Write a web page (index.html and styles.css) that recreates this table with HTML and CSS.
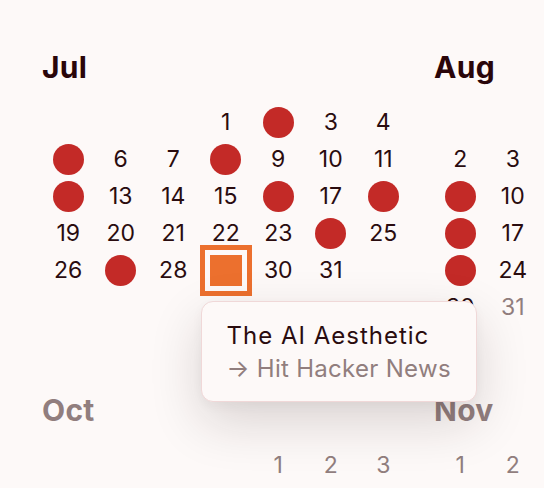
FILE: index.html
```html
<!DOCTYPE html>
<html lang="en">
<head>
<meta charset="utf-8">
<title>Calendar</title>
<link rel="stylesheet" href="styles.css">
</head>
<body>
<main class="year">
  <section class="month">
    <h2 class="month-name">Jul</h2>
    <div class="days">
      <span class="day s3">1</span><span class="day hit" title="Jul 2"><i class="dot"></i></span><span class="day">3</span><span class="day">4</span>
      <span class="day hit" title="Jul 5"><i class="dot"></i></span><span class="day">6</span><span class="day">7</span><span class="day hit" title="Jul 8"><i class="dot"></i></span><span class="day">9</span><span class="day">10</span><span class="day">11</span>
      <span class="day hit" title="Jul 12"><i class="dot"></i></span><span class="day">13</span><span class="day">14</span><span class="day">15</span><span class="day hit" title="Jul 16"><i class="dot"></i></span><span class="day">17</span><span class="day hit" title="Jul 18"><i class="dot"></i></span>
      <span class="day">19</span><span class="day">20</span><span class="day">21</span><span class="day">22</span><span class="day">23</span><span class="day hit" title="Jul 24"><i class="dot"></i></span><span class="day">25</span>
      <span class="day">26</span><span class="day hit" title="Jul 27"><i class="dot"></i></span><span class="day">28</span>
      <span class="day selected"><i class="mark"></i>
        <span class="tooltip">
          <span class="tip-title">The AI Aesthetic</span>
          <span class="tip-sub">→ Hit Hacker News</span>
        </span>
      </span><span class="day">30</span><span class="day">31</span>
    </div>
  </section>

  <section class="month">
    <h2 class="month-name">Aug</h2>
    <div class="days">
      <span class="day s6">1</span>
      <span class="day">2</span><span class="day">3</span><span class="day">4</span><span class="day">5</span><span class="day">6</span><span class="day">7</span><span class="day">8</span>
      <span class="day hit" title="Aug 9"><i class="dot"></i></span><span class="day">10</span><span class="day">11</span><span class="day">12</span><span class="day">13</span><span class="day">14</span><span class="day">15</span>
      <span class="day hit" title="Aug 16"><i class="dot"></i></span><span class="day">17</span><span class="day">18</span><span class="day">19</span><span class="day">20</span><span class="day">21</span><span class="day">22</span>
      <span class="day hit" title="Aug 23"><i class="dot"></i></span><span class="day">24</span><span class="day">25</span><span class="day">26</span><span class="day">27</span><span class="day">28</span><span class="day">29</span>
      <span class="day">30</span><span class="day future">31</span>
    </div>
  </section>

  <section class="month future">
    <h2 class="month-name">Sep</h2>
    <div class="days">
      <span class="day s2">1</span><span class="day">2</span><span class="day">3</span><span class="day">4</span><span class="day">5</span>
      <span class="day">6</span><span class="day">7</span><span class="day">8</span><span class="day">9</span><span class="day">10</span><span class="day">11</span><span class="day">12</span>
      <span class="day">13</span><span class="day">14</span><span class="day">15</span><span class="day">16</span><span class="day">17</span><span class="day">18</span><span class="day">19</span>
      <span class="day">20</span><span class="day">21</span><span class="day">22</span><span class="day">23</span><span class="day">24</span><span class="day">25</span><span class="day">26</span>
      <span class="day">27</span><span class="day">28</span><span class="day">29</span><span class="day">30</span>
    </div>
  </section>

  <section class="month future">
    <h2 class="month-name">Oct</h2>
    <div class="days">
      <span class="day s4">1</span><span class="day">2</span><span class="day">3</span>
      <span class="day">4</span><span class="day">5</span><span class="day">6</span><span class="day">7</span><span class="day">8</span><span class="day">9</span><span class="day">10</span>
      <span class="day">11</span><span class="day">12</span><span class="day">13</span><span class="day">14</span><span class="day">15</span><span class="day">16</span><span class="day">17</span>
      <span class="day">18</span><span class="day">19</span><span class="day">20</span><span class="day">21</span><span class="day">22</span><span class="day">23</span><span class="day">24</span>
      <span class="day">25</span><span class="day">26</span><span class="day">27</span><span class="day">28</span><span class="day">29</span><span class="day">30</span><span class="day">31</span>
    </div>
  </section>

  <section class="month future">
    <h2 class="month-name">Nov</h2>
    <div class="days">
      <span class="day">1</span><span class="day">2</span><span class="day">3</span><span class="day">4</span><span class="day">5</span><span class="day">6</span><span class="day">7</span>
      <span class="day">8</span><span class="day">9</span><span class="day">10</span><span class="day">11</span><span class="day">12</span><span class="day">13</span><span class="day">14</span>
      <span class="day">15</span><span class="day">16</span><span class="day">17</span><span class="day">18</span><span class="day">19</span><span class="day">20</span><span class="day">21</span>
      <span class="day">22</span><span class="day">23</span><span class="day">24</span><span class="day">25</span><span class="day">26</span><span class="day">27</span><span class="day">28</span>
      <span class="day">29</span><span class="day">30</span>
    </div>
  </section>

  <section class="month future">
    <h2 class="month-name">Dec</h2>
    <div class="days">
      <span class="day s2">1</span><span class="day">2</span><span class="day">3</span><span class="day">4</span><span class="day">5</span>
      <span class="day">6</span><span class="day">7</span><span class="day">8</span><span class="day">9</span><span class="day">10</span><span class="day">11</span><span class="day">12</span>
      <span class="day">13</span><span class="day">14</span><span class="day">15</span><span class="day">16</span><span class="day">17</span><span class="day">18</span><span class="day">19</span>
      <span class="day">20</span><span class="day">21</span><span class="day">22</span><span class="day">23</span><span class="day">24</span><span class="day">25</span><span class="day">26</span>
      <span class="day">27</span><span class="day">28</span><span class="day">29</span><span class="day">30</span><span class="day">31</span>
    </div>
  </section>
</main>
</body>
</html>
```

FILE: styles.css
```css
* {
  box-sizing: border-box;
  margin: 0;
  padding: 0;
}

html,
body {
  background: #fdf9f8;
}

body {
  width: 544px;
  height: 488px;
  overflow: hidden;
  font-family: Inter, "Noto Sans", sans-serif;
  color: #2a0c0f;
}

.year {
  display: grid;
  grid-template-columns: repeat(3, 367.5px);
  column-gap: 24.5px;
  row-gap: 65.6px;
  padding: 49px 0 0 42px;
  width: max-content;
}

.month-name {
  font-size: 30px;
  font-weight: 700;
  line-height: 36px;
  letter-spacing: 0.3px;
  margin-bottom: 19px;
  color: #2a060a;
}

.days {
  display: grid;
  grid-template-columns: repeat(7, 52.5px);
  grid-template-rows: repeat(6, 37px);
}

.day {
  position: relative;
  display: flex;
  align-items: center;
  justify-content: center;
  font-size: 23px;
  line-height: 37px;
}

.s2 { grid-column-start: 3; }
.s3 { grid-column-start: 4; }
.s4 { grid-column-start: 5; }
.s6 { grid-column-start: 7; }

.dot {
  display: block;
  width: 31px;
  height: 31px;
  border-radius: 50%;
  background: #c32a27;
}

.mark {
  display: block;
  width: 32px;
  height: 31px;
  background: #ec702e;
  outline: 5px solid #ec702e;
  outline-offset: 5px;
}

.future,
.future .month-name {
  color: #917e7e;
}

.tooltip {
  position: absolute;
  z-index: 10;
  top: calc(100% + 12px);
  left: 1px;
  width: 276px;
  display: flex;
  flex-direction: column;
  padding: 17px 20px 16px 25px;
  background: #fdf9f8;
  border: 1px solid #f0d8d8;
  border-radius: 12px;
  box-shadow: 0 20px 52px rgba(40, 20, 20, 0.16), 0 4px 12px rgba(40, 20, 20, 0.04);
  white-space: nowrap;
  font-size: 24px;
  line-height: 33px;
}

.tip-title {
  color: #2a0c0f;
  letter-spacing: 1px;
}

.tip-sub {
  color: #917e7e;
  letter-spacing: 0.3px;
}
```
